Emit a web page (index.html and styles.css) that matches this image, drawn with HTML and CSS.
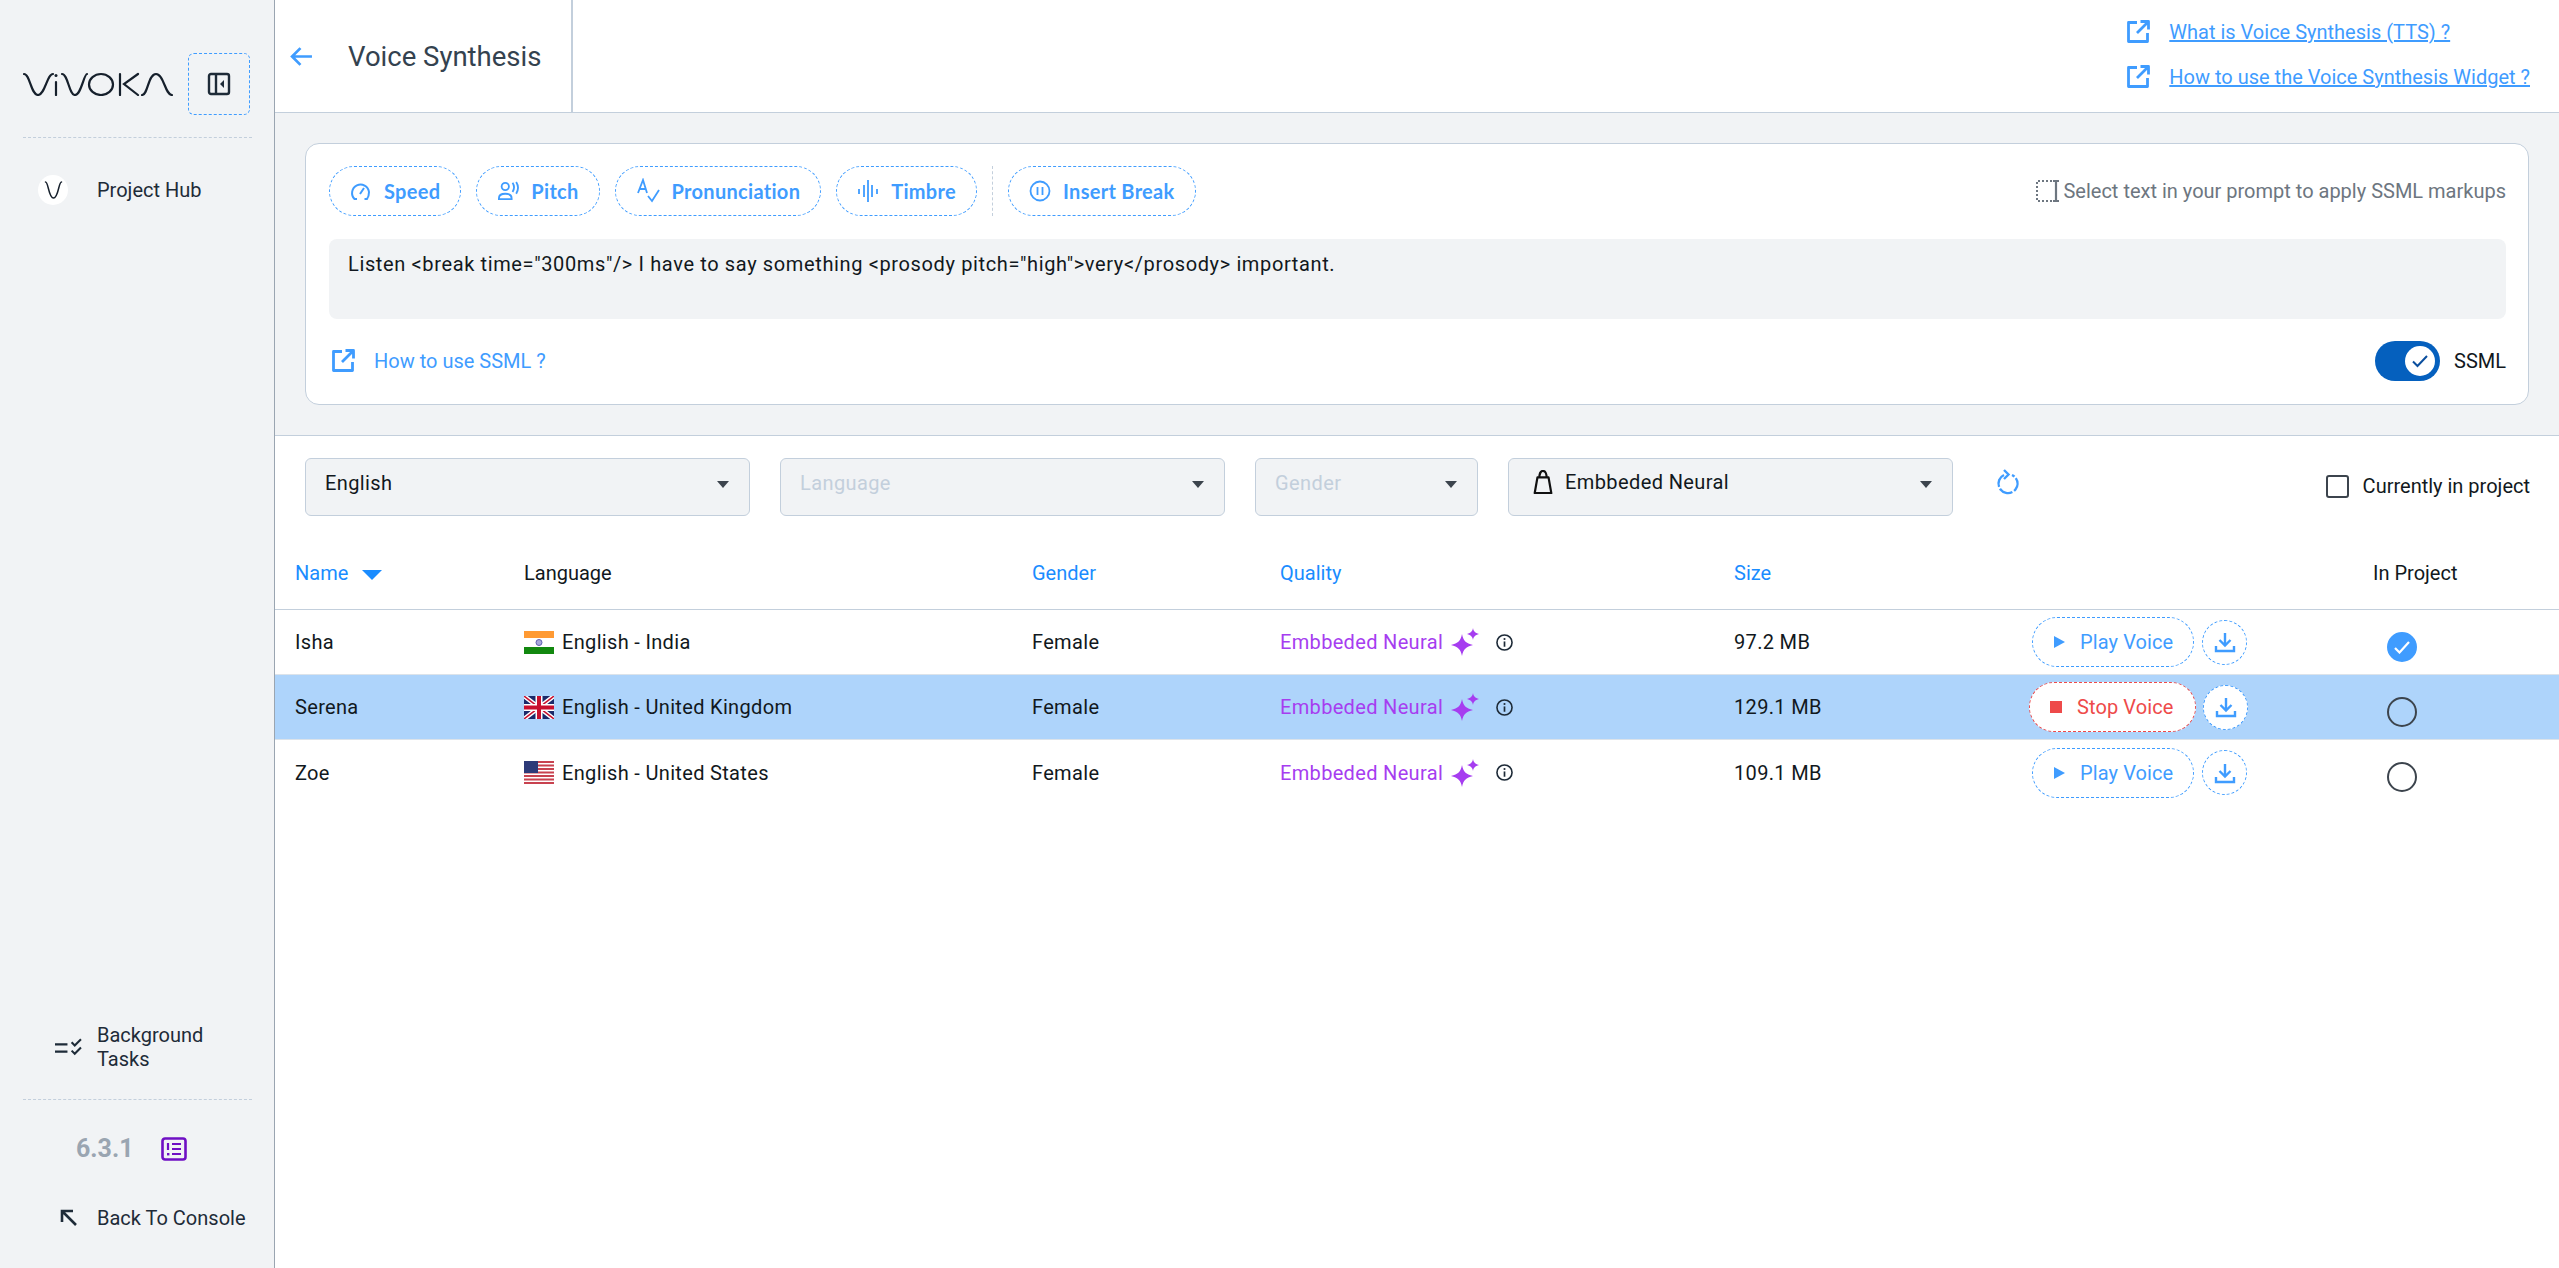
FILE: index.html
```html
<!DOCTYPE html>
<html lang="en">
  <head>
    <meta charset="UTF-8" />
    <meta name="viewport" content="width=device-width, initial-scale=1.0" />
    <title>Voice Synthesis</title>
    <link rel="stylesheet" href="styles.css">
  </head>
  <body>
    <svg class="defs" aria-hidden="true">
      <symbol id="i-external" viewBox="0 0 24 24">
        <path d="M11 2.500H2.500v19h19V13M14.500 1.500h8v8M22.500 1.500 11 13" fill="none" stroke="currentColor" stroke-width="2.800" stroke-linejoin="round"/>
      </symbol>
      <symbol id="i-download" viewBox="0 0 24 24">
        <path d="M12 3v12M6.500 10l5.500 5.500 5.500-5.500M3 16v5h18v-5" fill="none" stroke="currentColor" stroke-width="2.400"/>
      </symbol>
      <symbol id="i-spark" viewBox="0 0 28 28">
        <path d="M11 6c1.200 6.500 4 9.500 11 11-7 1.500-9.800 4.500-11 11-1.200-6.500-4-9.500-11-11 7-1.500 9.800-4.500 11-11zM22 0c.6 3.300 2 5 6 6-4 1-5.400 2.700-6 6-.6-3.300-2-5-6-6 4-1 5.400-2.700 6-6z" fill="currentColor"/>
      </symbol>
      <symbol id="i-info" viewBox="0 0 16 16">
        <circle cx="8" cy="8" r="7.100" fill="none" stroke="currentColor" stroke-width="1.500"/>
        <path d="M8 7v5" stroke="currentColor" stroke-width="1.600"/>
        <circle cx="8" cy="4.700" r="1" fill="currentColor"/>
      </symbol>
    </svg>

    <div class="app">
      <aside class="sidebar">
        <div class="sidebar-top">
          <div class="brand">
            <svg class="logo" viewBox="0 0 150 24" role="img" aria-label="Vivoka">
              <g fill="none" stroke="#16202c" stroke-width="2.200" stroke-linecap="round">
                <path d="M1 2c6 0 7 21 14 21S24 2 30 2"/>
                <path d="M33 10v13"/>
                <path d="M39 2c6 0 7 21 13 21S61 2 64 2"/>
                <ellipse cx="78" cy="12.500" rx="12" ry="10.500"/>
                <path d="M97 2v21M115 2l-14 10 14 11"/>
                <path d="M119 23c6 0 6-21 14-21s9 21 16 21"/>
              </g>
              <circle cx="33" cy="3.500" r="1.500" fill="#16202c"/>
            </svg>
            <button class="collapse" type="button" aria-label="Collapse">
              <svg viewBox="0 0 24 24" width="24" height="24">
                <rect x="2" y="2" width="20" height="20" rx="2" fill="none" stroke="#1e2b38" stroke-width="2.400"/>
                <path d="M9 2v20" stroke="#1e2b38" stroke-width="2.400"/>
                <path d="M17 8v8l-4-4z" fill="#1e2b38"/>
              </svg>
            </button>
          </div>
          <a class="side-link hub">
            <span class="hub-icon">
              <svg viewBox="0 0 20 18" width="21" height="18"><path d="M2 1c3 0 3 16 8 16s5-16 8-16" fill="none" stroke="#16202c" stroke-width="1.500" stroke-linecap="round"/></svg>
            </span>
            Project Hub
          </a>
        </div>
        <div class="sidebar-bottom">
          <a class="side-link tasks">
            <svg class="side-icon" viewBox="0 0 26 18" width="27" height="19">
              <path d="M0 6h12M0 13h12" stroke="#1e2b38" stroke-width="2.200"/>
              <path d="M16 4l3 3 6-6M16 12l3 3 6-6" fill="none" stroke="#1e2b38" stroke-width="2"/>
            </svg>
            <span>Background Tasks</span>
          </a>
          <div class="version">
            <span>6.3.1</span>
            <svg viewBox="0 0 26 24" width="26" height="24">
              <rect x="1.500" y="1.500" width="23" height="21" rx="2.500" fill="none" stroke="#6f0fc4" stroke-width="2.600"/>
              <path d="M7 6v7M11 7h9M11 12h9M11 17h9" stroke="#6f0fc4" stroke-width="2.200"/>
              <path d="M6 16h2.400v2.400H6z" fill="#6f0fc4"/>
            </svg>
          </div>
          <a class="side-link back">
            <svg class="side-icon" viewBox="0 0 18 18" width="18" height="18">
              <path d="M2 13V2h11M2 2l14 14" fill="none" stroke="#1e2b38" stroke-width="2.600"/>
            </svg>
            Back To Console
          </a>
        </div>
      </aside>

      <main class="main">
        <header class="topbar">
          <div class="title-block">
            <svg class="back-arrow" viewBox="0 0 22 20" width="23" height="21">
              <path d="M21 10H2M10 2l-8 8 8 8" fill="none" stroke="#3f9cff" stroke-width="2.600"/>
            </svg>
            <h1>Voice Synthesis</h1>
          </div>
          <div class="help-links">
            <a class="help-link"><svg class="ext"><use href="#i-external"/></svg><span>What is Voice Synthesis (TTS) ?</span></a>
            <a class="help-link"><svg class="ext"><use href="#i-external"/></svg><span>How to use the Voice Synthesis Widget ?</span></a>
          </div>
        </header>

        <section class="editor">
          <div class="card">
            <div class="toolbar">
              <button class="chip" type="button">
                <svg viewBox="0 0 22 22" width="22" height="22"><path d="M7 19H4.500A8.500 8.500 0 1 1 19 12c0 2.500-.5 5-2 7h-2.500M10 14l4-6" fill="none" stroke="currentColor" stroke-width="2"/></svg>
                Speed
              </button>
              <button class="chip" type="button">
                <svg viewBox="0 0 24 22" width="22" height="20"><g fill="none" stroke="currentColor" stroke-width="2"><circle cx="9" cy="6" r="4"/><path d="M2 19c0-4 3-5 7-5s7 1 7 5v1H2zM17 2c2 3 2 7 0 10M21 1c2.500 4 2.500 9 0 13"/></g></svg>
                Pitch
              </button>
              <button class="chip" type="button">
                <svg viewBox="0 0 24 26" width="24" height="26"><path d="M2 15 7 2l4 13M3.500 11h6M12 18l4 5 7-11" fill="none" stroke="currentColor" stroke-width="1.800"/></svg>
                Pronunciation
              </button>
              <button class="chip" type="button">
                <svg viewBox="0 0 22 24" width="22" height="24"><path d="M2 10v5M7 6v12M11 1v22M15 6v12M20 10v5" stroke="currentColor" stroke-width="1.800"/></svg>
                Timbre
              </button>
              <span class="tool-sep"></span>
              <button class="chip" type="button">
                <svg viewBox="0 0 22 22" width="22" height="22"><circle cx="11" cy="11" r="9.500" fill="none" stroke="currentColor" stroke-width="1.800"/><path d="M8.500 7v8M13.500 7v8" stroke="currentColor" stroke-width="1.800"/></svg>
                Insert Break
              </button>
              <div class="hint">
                <svg viewBox="0 0 24 24" width="24" height="24"><path d="M16 2H1v20h15" fill="none" stroke="#6d7680" stroke-width="2" stroke-dasharray="2 2"/><path d="M17 2h6M20 2v20M17 22h6" stroke="#6d7680" stroke-width="2.200"/></svg>
                <span>Select text in your prompt to apply SSML markups</span>
              </div>
            </div>
            <div class="prompt">Listen &lt;break time="300ms"/&gt; I have to say something &lt;prosody pitch="high"&gt;very&lt;/prosody&gt; important.</div>
            <div class="card-foot">
              <a class="ssml-link"><svg class="ext"><use href="#i-external"/></svg>How to use SSML ?</a>
              <div class="ssml-toggle">
                <span class="switch">
                  <span class="knob">
                    <svg viewBox="0 0 16 14" width="16" height="14"><path d="M1 7.500 5.500 12 15 2" fill="none" stroke="#0b4f9e" stroke-width="2"/></svg>
                  </span>
                </span>
                SSML
              </div>
            </div>
          </div>
        </section>

        <section class="voices">
          <div class="filters">
            <div class="select w-wide">English<i class="caret"></i></div>
            <div class="select w-wide off">Language<i class="caret"></i></div>
            <div class="select w-small off">Gender<i class="caret"></i></div>
            <div class="select w-wide quality-select">
              <svg viewBox="0 0 20 26" width="20" height="24"><path d="M6 9c0-5 1.500-8 4-8s4 3 4 8M4 8h12l3 17H1z" fill="none" stroke="#111" stroke-width="2.400" stroke-linejoin="round"/></svg>
              Embbeded Neural<i class="caret"></i>
            </div>
            <svg class="refresh" viewBox="0 0 24 28" width="24" height="28"><path d="M8 7A9.500 9.500 0 1 0 16 7M8 2l4.500 4.500L8 11" fill="none" stroke="#3f9cff" stroke-width="2.400" stroke-dasharray="14 2"/></svg>
            <label class="only-project"><span class="box"></span>Currently in project</label>
          </div>

          <div class="row head">
            <span class="sort">Name <i class="sort-caret"></i></span>
            <span class="plain">Language</span>
            <span>Gender</span>
            <span>Quality</span>
            <span>Size</span>
            <span></span>
            <span class="plain">In Project</span>
          </div>

          <div class="row">
            <span>Isha</span>
            <span class="lang">
              <svg class="flag" viewBox="0 0 30 23"><rect width="30" height="23" fill="#fff"/><rect width="30" height="7" fill="#ff9a33"/><rect y="16" width="30" height="7" fill="#12880f"/><circle cx="15" cy="11.500" r="3" fill="#a9a8dc" stroke="#5f5fb0"/></svg>
              English - India
            </span>
            <span>Female</span>
            <span class="quality">Embbeded Neural <svg class="spark"><use href="#i-spark"/></svg><svg class="info"><use href="#i-info"/></svg></span>
            <span>97.2 MB</span>
            <span class="actions">
              <button class="play" type="button"><i class="tri"></i>Play Voice</button>
              <button class="dl" type="button"><svg><use href="#i-download"/></svg></button>
            </span>
            <span class="state"><span class="mark on"><svg viewBox="0 0 16 14" width="16" height="14"><path d="M1 8l4.500 4.500L15 2" fill="none" stroke="#fff" stroke-width="2.200"/></svg></span></span>
          </div>

          <div class="row active">
            <span>Serena</span>
            <span class="lang">
              <svg class="flag" viewBox="0 0 30 23">
                <rect width="30" height="23" fill="#1b2a6b"/>
                <path d="M0 0l30 23M30 0 0 23" stroke="#fff" stroke-width="4.500"/>
                <path d="M0 0l30 23M30 0 0 23" stroke="#c8102e" stroke-width="1.500"/>
                <path d="M15 0v23M0 11.500h30" stroke="#fff" stroke-width="7"/>
                <path d="M15 0v23M0 11.500h30" stroke="#c8102e" stroke-width="4"/>
              </svg>
              English - United Kingdom
            </span>
            <span>Female</span>
            <span class="quality">Embbeded Neural <svg class="spark"><use href="#i-spark"/></svg><svg class="info"><use href="#i-info"/></svg></span>
            <span>129.1 MB</span>
            <span class="actions">
              <button class="play stop" type="button"><i class="sq"></i>Stop Voice</button>
              <button class="dl" type="button"><svg><use href="#i-download"/></svg></button>
            </span>
            <span class="state"><span class="mark"></span></span>
          </div>

          <div class="row">
            <span>Zoe</span>
            <span class="lang">
              <svg class="flag" viewBox="0 0 30 23">
                <rect width="30" height="23" fill="#fff"/>
                <path d="M0 1h30M0 4.500h30M0 8h30M0 11.500h30M0 15h30M0 18.500h30M0 22h30" stroke="#c8424f" stroke-width="1.800"/>
                <rect width="14" height="12" fill="#2d3a78"/>
              </svg>
              English - United States
            </span>
            <span>Female</span>
            <span class="quality">Embbeded Neural <svg class="spark"><use href="#i-spark"/></svg><svg class="info"><use href="#i-info"/></svg></span>
            <span>109.1 MB</span>
            <span class="actions">
              <button class="play" type="button"><i class="tri"></i>Play Voice</button>
              <button class="dl" type="button"><svg><use href="#i-download"/></svg></button>
            </span>
            <span class="state"><span class="mark"></span></span>
          </div>
        </section>
      </main>
    </div>
  </body>
</html>
```

FILE: styles.css
```css
* {
  box-sizing: border-box;
}
body {
  margin: 0;
  font-family: Roboto, Arial, sans-serif;
  font-size: 20px;
  color: #111820;
  background-color: #fff;
  overflow: hidden;
}
button {
  font-family: inherit;
  background: none;
  padding: 0;
  cursor: pointer;
}
.defs {
  display: none;
}
.app {
  display: flex;
  height: 100vh;
}

/* sidebar */
.sidebar {
  width: 275px;
  flex: none;
  display: flex;
  flex-direction: column;
  justify-content: space-between;
  background-color: #f1f3f5;
  border-right: 1px solid #9aa5b1;
  padding: 53px 22px 0 23px;
  color: #1e2b38;
}
.brand {
  display: flex;
  align-items: center;
  justify-content: space-between;
  padding-bottom: 22px;
  border-bottom: 1px dashed #c3cfdc;
}
.logo {
  width: 150px;
  height: 24px;
}
.collapse {
  width: 62px;
  height: 62px;
  display: flex;
  align-items: center;
  justify-content: center;
  border: 1px dashed #3f9cff;
  border-radius: 6px;
  margin-right: 2px;
}
.side-link {
  display: flex;
  align-items: center;
  font-size: 20px;
  line-height: 24px;
}
.hub {
  margin-top: 37px;
  padding-left: 15px;
}
.hub-icon {
  width: 30px;
  height: 30px;
  border-radius: 50%;
  background-color: #fff;
  display: flex;
  align-items: center;
  justify-content: center;
  margin-right: 29px;
}
.tasks {
  padding: 0 0 28px 32px;
  border-bottom: 1px dashed #c3cfdc;
}
.tasks .side-icon {
  margin-right: 15px;
  flex: none;
}
.version {
  display: flex;
  align-items: center;
  gap: 27px;
  padding: 34px 0 0 53px;
  font-size: 25px;
  font-weight: 700;
  color: #9aa5b1;
}
.back {
  margin-top: 43px;
  margin-bottom: 38px;
  padding-left: 37px;
  white-space: nowrap;
}
.back .side-icon {
  margin-right: 19px;
}

/* top bar */
.main {
  flex: 1;
  min-width: 0;
  display: flex;
  flex-direction: column;
}
.topbar {
  height: 113px;
  flex: none;
  display: flex;
  justify-content: space-between;
  border-bottom: 1px solid #c3cfdc;
}
.title-block {
  width: 298px;
  display: flex;
  align-items: center;
  padding-left: 15px;
  border-right: 2px solid #c3cfdc;
}
.back-arrow {
  margin-right: 35px;
}
.title-block h1 {
  margin: 0;
  font-size: 27.500px;
  font-weight: 400;
  color: #34424f;
}
.help-links {
  display: flex;
  flex-direction: column;
  gap: 21px;
  padding: 20px 29px 0 0;
}
.help-link {
  display: flex;
  align-items: center;
  color: #3f9cff;
  line-height: 24px;
}
.help-link span {
  text-decoration: underline;
}
.ext {
  width: 24px;
  height: 24px;
  margin-right: 19px;
}

/* prompt card */
.editor {
  flex: none;
  height: 323px;
  padding: 30px 30px 0;
  background-color: #f1f3f5;
  border-bottom: 1px solid #c3cfdc;
}
.card {
  height: 262px;
  padding: 22px 22px 0 23px;
  background-color: #fff;
  border: 1px solid #c3cfdc;
  border-radius: 14px;
}
.toolbar {
  display: flex;
  align-items: center;
  gap: 15px;
}
.chip {
  height: 50px;
  display: flex;
  align-items: center;
  gap: 12px;
  padding: 0 20px;
  border: 1px dashed #3f9cff;
  border-radius: 25px;
  font-family: Lato, sans-serif;
  font-size: 20px;
  font-weight: 700;
  letter-spacing: 0.3px;
  color: #3f9cff;
}
.tool-sep {
  width: 0;
  height: 50px;
  border-left: 1px dashed #c3cfdc;
}
.hint {
  margin-left: auto;
  display: flex;
  align-items: center;
  gap: 3px;
  color: #6d7680;
}
.prompt {
  height: 80px;
  margin-top: 23px;
  padding: 12px 19px;
  background-color: #f1f3f5;
  border-radius: 8px;
  line-height: 26px;
  letter-spacing: 0.63px;
}
.card-foot {
  display: flex;
  align-items: center;
  justify-content: space-between;
  margin-top: 22px;
}
.ssml-link {
  display: flex;
  align-items: center;
  padding-left: 2px;
  color: #3f9cff;
}
.ssml-toggle {
  display: flex;
  align-items: center;
  gap: 14px;
}
.switch {
  width: 65px;
  height: 40px;
  display: flex;
  align-items: center;
  justify-content: flex-end;
  padding-right: 5px;
  background-color: #0560be;
  border-radius: 20px;
}
.knob {
  width: 30px;
  height: 30px;
  display: flex;
  align-items: center;
  justify-content: center;
  background-color: #fff;
  border-radius: 50%;
}

/* filters */
.filters {
  display: flex;
  align-items: flex-start;
  gap: 30px;
  height: 108px;
  padding: 22px 29px 0 30px;
}
.select {
  position: relative;
  height: 58px;
  padding: 12px 19px;
  background-color: #f1f3f5;
  border: 1px solid #c3cfdc;
  border-radius: 6px;
  line-height: 24px;
  letter-spacing: 0.4px;
}
.w-wide {
  width: 445px;
}
.w-small {
  width: 223px;
}
.off {
  color: #c3cfdc;
}
.quality-select {
  display: flex;
  align-items: flex-start;
  gap: 12px;
  padding-left: 24px;
  padding-top: 11px;
}
.caret {
  position: absolute;
  top: 22px;
  right: 20px;
  border-left: 6px solid transparent;
  border-right: 6px solid transparent;
  border-top: 7px solid #3c444d;
}
.refresh {
  margin-left: 13px;
  margin-top: 10px;
}
.only-project {
  margin-left: auto;
  margin-top: 16px;
  display: flex;
  align-items: center;
  gap: 14px;
}
.box {
  width: 23px;
  height: 23px;
  border: 2px solid #3c444d;
  border-radius: 3px;
}

/* voice table */
.row {
  display: grid;
  grid-template-columns: 229px 508px 248px 454px 298px 341px 1fr;
  align-items: center;
  height: 65px;
  padding-left: 20px;
  border-bottom: 1px solid #dce3ea;
  letter-spacing: 0.33px;
}
.row:last-child {
  border-bottom: none;
}
.row.head {
  height: 66px;
  padding-bottom: 7px;
  border-bottom: 1px solid #c3cfdc;
  color: #1a8cff;
  letter-spacing: 0;
}
.head .plain {
  color: #111820;
}
.sort {
  display: flex;
  align-items: center;
  gap: 14px;
}
.sort-caret {
  margin-top: 4px;
  border-left: 10px solid transparent;
  border-right: 10px solid transparent;
  border-top: 10px solid #1a8cff;
}
.row.active {
  background-color: #aed4fb;
}
.lang {
  display: flex;
  align-items: center;
  gap: 8px;
}
.flag {
  width: 30px;
  height: 23px;
  flex: none;
}
.quality {
  display: flex;
  align-items: center;
  color: #a63df0;
}
.spark {
  width: 28px;
  height: 28px;
  margin-left: 8px;
}
.info {
  width: 17px;
  height: 17px;
  margin-left: 17px;
  color: #1e2b38;
}
.actions {
  display: flex;
  align-items: center;
  gap: 8px;
}
.play {
  width: 162px;
  height: 50px;
  display: flex;
  align-items: center;
  gap: 15px;
  padding-left: 21px;
  border: 1px dashed #3f9cff;
  border-radius: 25px;
  font-size: 20px;
  letter-spacing: 0.1px;
  color: #3f9cff;
}
.tri {
  border-top: 6.500px solid transparent;
  border-bottom: 6.500px solid transparent;
  border-left: 11px solid #3f9cff;
}
.stop {
  width: 167px;
  margin-left: -3px;
  margin-right: -1px;
  background-color: #fff;
  border-color: #ee4a4a;
  color: #ee4a4a;
  padding-left: 20px;
}
.sq {
  width: 12px;
  height: 12px;
  background-color: #ee4a4a;
}
.dl {
  width: 45px;
  height: 45px;
  display: flex;
  align-items: center;
  justify-content: center;
  border: 1px dashed #3f9cff;
  border-radius: 50%;
  color: #3f9cff;
}
.dl svg {
  width: 24px;
  height: 24px;
}
.active .dl {
  background-color: #fff;
}
.state {
  padding: 9px 0 0 14px;
}
.mark {
  width: 30px;
  height: 30px;
  display: flex;
  align-items: center;
  justify-content: center;
  border: 2px solid #3c444d;
  border-radius: 50%;
}
.mark.on {
  background-color: #3f9cff;
  border-color: #3f9cff;
}
```
